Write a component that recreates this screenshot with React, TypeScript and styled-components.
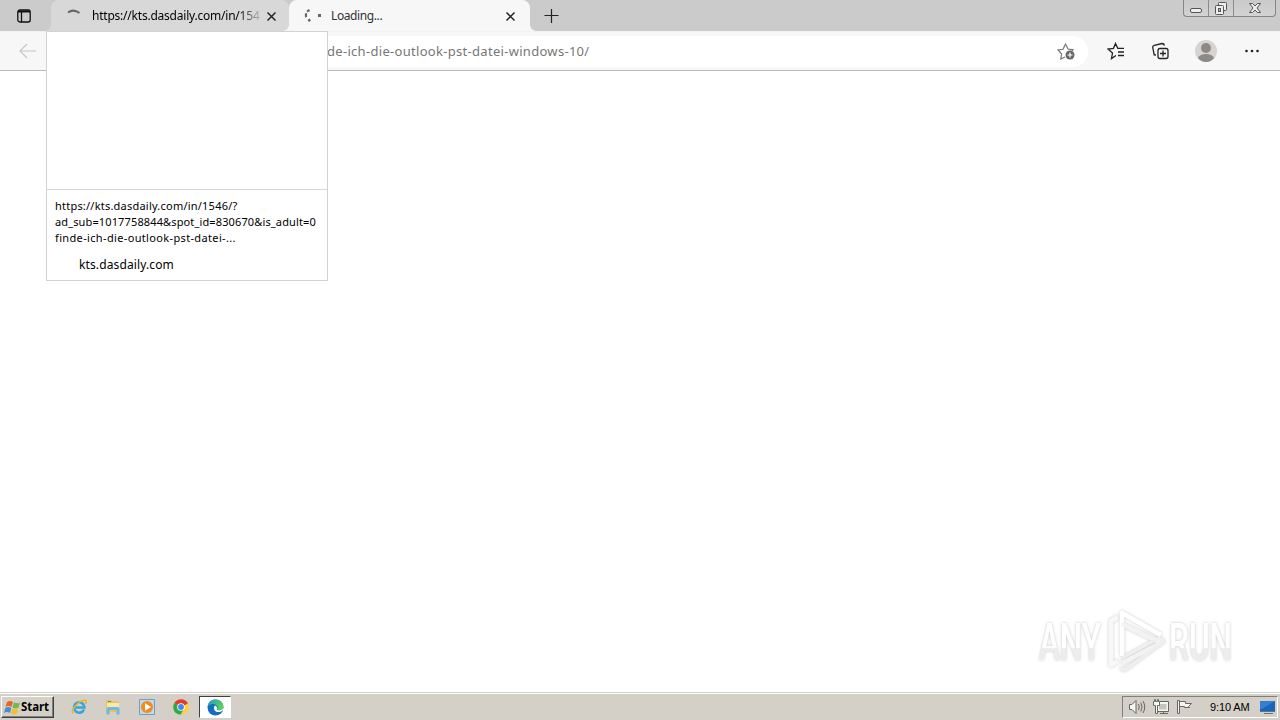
import React from 'react';
import styled, { createGlobalStyle } from 'styled-components';

const GlobalStyle = createGlobalStyle`
    * { box-sizing: border-box; }
    body {
        margin: 0;
        overflow: hidden;
        background: #fff;
        font-family: "Noto Sans", "Open Sans", sans-serif;
    }
    svg { display: block; flex: none; }
`;

const Screen = styled.div`
    position: relative;
    display: flex;
    flex-direction: column;
    width: 1280px;
    height: 720px;
`;

const TabStrip = styled.div`
    display: flex;
    flex: none;
    height: 31px;
    background: #cbcbcb;
`;

const TabActions = styled.div`
    width: 51px;
    padding: 9px 0 0 17px;
`;

const Tab = styled.div<{ $active?: boolean }>`
    position: relative;
    display: flex;
    align-items: center;
    width: ${props => props.$active ? 241 : 238}px;
    padding: 1px 0 0 15px;
    border-radius: 8px 8px 0 0;
    background: ${props => props.$active ? "#f7f7f7" : "#d8d8d8"};
    &::before, &::after {
        content: "";
        position: absolute;
        bottom: 0;
        width: 6px;
        height: 6px;
    }
    &::before {
        left: -6px;
        background: radial-gradient(circle at 0 0, transparent 5.5px, ${props => props.$active ? "#f7f7f7" : "#d8d8d8"} 6px);
    }
    &::after {
        right: -6px;
        background: radial-gradient(circle at 100% 0, transparent 5.5px, ${props => props.$active ? "#f7f7f7" : "#d8d8d8"} 6px);
    }
`;

const Label = styled.span<{ $size: number, $spacing?: number, $color?: string, $width?: number }>`
    display: block;
    flex: none;
    width: ${props => props.$width ? props.$width + "px" : "auto"};
    white-space: nowrap;
    font-size: ${props => props.$size}px;
    line-height: 18px;
    letter-spacing: ${props => props.$spacing ?? 0}px;
    color: ${props => props.$color ?? "#000"};
`;

const TabTitle = styled(Label)<{ $fade?: boolean }>`
    margin-left: ${props => props.$fade ? 11 : 9}px;
    ${props => props.$fade && "-webkit-mask-image: linear-gradient(90deg, #000 146px, transparent 172px);"}
`;

const CloseIcon = styled.svg`
    margin-left: 2px;
`;

const NewTab = styled.div`
    padding: 9px 0 0 14px;
`;

const WindowButtons = styled.div`
    display: flex;
    height: 17px;
    margin: 0 4px 0 auto;
    border: 1px solid #868686;
    border-top: 0;
    border-radius: 0 0 4px 4px;
    background: linear-gradient(#c9c9c9, #d3d3d3);
    overflow: hidden;
`;

const WindowButton = styled.div<{ $width: number }>`
    display: flex;
    justify-content: center;
    width: ${props => props.$width}px;
    & + & { border-left: 1px solid #8b8b8b; }
`;

const Toolbar = styled.div`
    display: flex;
    align-items: center;
    flex: none;
    height: 40px;
    padding-left: 19px;
    background: #f7f7f7;
    border-top: 1px solid #f2f2f2;
    border-bottom: 1px solid #b9b9b9;
`;

const AddressBar = styled.div`
    display: flex;
    align-items: center;
    justify-content: space-between;
    width: 958px;
    height: 31px;
    margin-left: 93px;
    padding: 0 13px 0 197px;
    border-radius: 16px;
    background: #fff;
`;

const ToolbarIcons = styled.div`
    display: flex;
    align-items: center;
    margin-left: 19px;
`;

const Avatar = styled.svg`
    margin: 0 17px 0 25px;
`;

const Page = styled.main`
    flex: 1;
    display: flex;
    justify-content: flex-end;
    align-items: flex-end;
    padding: 0 40px 14px 0;
    background: #fff;
`;

const HoverCard = styled.div`
    position: absolute;
    left: 46px;
    top: 31px;
    width: 282px;
    height: 250px;
    border: 1px solid #d2d2d2;
    background: #fff;
`;

const Preview = styled.div`
    height: 158px;
    border-bottom: 1px solid #d6d6d6;
`;

const CardText = styled.div`
    display: flex;
    flex-direction: column;
    padding: 8px 0 0 8px;
`;

const CardLine = styled(Label)`
    line-height: 16px;
`;

const CardHost = styled(Label)`
    margin: 10px 0 0 24px;
`;

const Taskbar = styled.footer`
    display: flex;
    align-items: center;
    flex: none;
    height: 28px;
    padding: 1px 2px 0 1px;
    border-top: 1px solid #d4d0c8;
    background: #d4d0c8;
    box-shadow: inset 0 1px 0 #fff;
`;

const StartButton = styled.div`
    display: flex;
    align-items: center;
    width: 53px;
    height: 22px;
    padding-left: 2px;
    border: 1px solid;
    border-color: #fff #404040 #404040 #fff;
    box-shadow: inset -1px -1px 0 #808080;
`;

const StartText = styled.b`
    font: bold 11.5px/18px "Open Sans", sans-serif;
    letter-spacing: -0.1px;
    color: #000;
`;

const QuickLaunch = styled.div`
    display: flex;
    align-items: center;
    gap: 18px;
    margin-left: 17px;
`;

const ActiveTask = styled.div`
    display: flex;
    align-items: center;
    justify-content: center;
    width: 32px;
    height: 22px;
    margin-left: 10px;
    border: 1px solid;
    border-color: #404040 #fff #fff #404040;
    background: #fff;
`;

const Tray = styled.div`
    display: flex;
    align-items: center;
    width: 156px;
    height: 22px;
    margin-left: auto;
    padding-left: 6px;
    border: 1px solid;
    border-color: #808080 #fff #fff #808080;
`;

const Clock = styled.span`
    width: 42px;
    margin: 0 9px 0 15px;
    white-space: nowrap;
    font: 11px/16px "Liberation Sans", sans-serif;
    letter-spacing: -0.1px;
    color: #000;
`;

const TabMenuIcon = () => (
    <svg width="14" height="14" viewBox="0 0 14 14" fill="none" stroke="#111" strokeWidth="1.3">
        <rect x=".8" y="1" width="12.4" height="12" rx="2" />
        <path d="M1 2.5h12" strokeWidth="2" />
        <path d="M4.5 3v10" />
    </svg>
);

const Close = () => (
    <CloseIcon width="15" height="15" viewBox="0 0 15 15" stroke="#222" strokeWidth="1.5">
        <path d="M3.5 3.5l8 8M11.5 3.5l-8 8" />
    </CloseIcon>
);

const Watermark = () => (
    <svg width="204" height="74" viewBox="0 0 204 74" overflow="visible">
        <defs>
            <linearGradient id="letters" x1="0" y1="0" x2="0" y2="1">
                <stop offset=".58" stopColor="#fff" />
                <stop offset=".6" stopColor="#ededed" />
            </linearGradient>
            <filter id="halo" x="-10%" y="-20%" width="120%" height="140%">
                <feDropShadow dx="0" dy="0" stdDeviation="1.5" floodColor="#888" floodOpacity=".5" />
            </filter>
        </defs>
        <g filter="url(#halo)">
            <g fill="url(#letters)" fontFamily="Roboto" fontSize="52" fontWeight="500">
                <text x="3" y="56" textLength="62" lengthAdjust="spacingAndGlyphs">ANY</text>
                <text x="133" y="56" textLength="63" lengthAdjust="spacingAndGlyphs">RUN</text>
            </g>
            <g fill="none" stroke="#fff" strokeWidth="4.5" strokeLinejoin="round">
                <path d="M86 52V9l39 22" />
                <path d="M82 13l-7 4v44l7-4" stroke="#f8f8f8" />
                <path d="M86 20l39 19-39 20" stroke="#f3f3f3" />
                <path d="M86 54l37-20 5 3-39 29-5-2" stroke="#efefef" strokeWidth="3" />
            </g>
        </g>
    </svg>
);

const WindowsLogo = () => (
    <svg width="17" height="17" viewBox="0 0 17 17">
        <path d="M3 3q3-2 6 0L7.5 8q-3-2-6 0z" fill="#e8642b" />
        <path d="M10 3.3q3 2 6 .2L14.5 8.5q-3 2-6 0z" fill="#72b84a" />
        <path d="M1.3 9q3-2 6 0L6 14q-3-2-6 0z" fill="#428fd2" />
        <path d="M8.3 9.4q3 2 6 0L13 14.6q-3 2-6 0z" fill="#f4bd32" />
    </svg>
);

const ExplorerLogo = () => (
    <svg width="16" height="16" viewBox="0 0 16 16" fill="none">
        <path d="M13 10.5A5.2 5.2 0 1 1 13.4 8.5H4" stroke="#3ba4dc" strokeWidth="2.6" />
        <path d="M2 14.5C-1 11 8 1.5 14 1.3c2 0 1.5 2 .5 3.5" stroke="#e6b52e" strokeWidth="1.5" />
    </svg>
);

const FolderLogo = () => (
    <svg width="16" height="16" viewBox="0 0 16 16">
        <path d="M1 1h5l1 1.500h7V13H1z" fill="#e7c260" />
        <path d="M2 4h12v7H2z" fill="#f9e9a4" />
        <path d="M1.500 15.500V10q0-2 2-2h9q2 0 2 2v5.500h-3V11h-7v4.500z" fill="#72b8df" />
        <path d="M3 2.5h3" stroke="#4ba35c" />
    </svg>
);

const PlayerLogo = () => (
    <svg width="16" height="16" viewBox="0 0 16 16">
        <path d="M.5.5h15v15H.5z" fill="#c2d9ec" stroke="#6f9fc8" />
        <circle cx="8" cy="8" r="6" fill="#f18a20" />
        <path d="M6 4.3L12 8l-6 3.7z" fill="#fff" />
    </svg>
);

const ChromeLogo = () => (
    <svg width="16" height="16" viewBox="0 0 16 16">
        <circle cx="8" cy="8" r="7.8" fill="#ffce44" />
        <path d="M8 8L1.3 4A7.8 7.8 0 0 1 14.8 4.2z" fill="#e33b2e" />
        <path d="M8 8L1.3 4A7.8 7.8 0 0 0 7.5 15.8l3.5-6z" fill="#2da94f" />
        <path d="M8 4.2h6.8L8 8z" fill="#e33b2e" />
        <circle cx="8" cy="8" r="3.8" fill="#fff" />
        <circle cx="8" cy="8" r="2.9" fill="#4285f4" />
    </svg>
);

const EdgeLogo = () => (
    <svg width="17" height="17" viewBox="0 0 17 17">
        <defs>
            <linearGradient id="edge" x1="0" y1="0" x2="1" y2=".4">
                <stop stopColor="#159bd7" />
                <stop offset="1" stopColor="#62cf55" />
            </linearGradient>
        </defs>
        <circle cx="8.5" cy="8.5" r="8" fill="#126fbd" />
        <path d="M.5 8C1 3 4.5.5 8.5.5c5 0 8 3.5 8 7 0 3-4 4.5-6.500 3 2-3-1-5.500-4-5.500C3.500 5 1.500 6 .5 8z" fill="url(#edge)" />
        <path d="M8 6.500c-2 2-1 6 2.500 6.500 2 .3 3.500-.3 5-1.500l1.500-3-3 2.500c-2 .7-4 .3-4.300-.7.8-1.500.3-3-1.700-3.800z" fill="#fff" />
    </svg>
);

const TrayIcons = () => (
    <svg width="66" height="18" viewBox="0 0 66 18" fill="#f5f5f2" stroke="#666">
        <path d="M.5 6.500H3l4-4v13l-4-4H.5z" />
        <path d="M9.500 6q1.500 3 0 6M11.800 4.500q2.500 4.500 0 9M14 3q3.500 6 0 12" fill="none" />
        <path d="M27.500 3.500h12v10h-12z" />
        <path d="M30 6h7.500v5.500H30z" fill="#c6c4bf" stroke="none" />
        <path d="M31 15.500h8M34.500 13.500v2" />
        <path d="M25.500 1.500v2h-1v4h2v8h2v-8h2v-4h-1v-2h-1v2h-2v-2z" />
        <path d="M48.500 2.500h2v13h-2zM50.500 3.500h6v2h6l-3 3 1 1h-5v-1h-5z" />
    </svg>
);

const MonitorIcon = () => (
    <svg width="17" height="16" viewBox="0 0 17 16">
        <path d="M0 2h15v10H0z" fill="#1765bd" />
        <path d="M0 2h15L2 10H0z" fill="#347fd1" />
        <path d="M0 12.500h15M4 14.500h9" stroke="#65717c" />
    </svg>
);

function App() {
    return (
        <Screen>
            <GlobalStyle />
            <TabStrip>
                <TabActions><TabMenuIcon /></TabActions>
                <Tab>
                    <svg width="15" height="15" viewBox="0 0 15 15" fill="none" stroke="#666" strokeWidth="2">
                        <path d="M2 3.500Q7.500-.5 13.500 4" />
                    </svg>
                    <TabTitle $size={12} $spacing={-0.22} $width={170} $fade>https://kts.dasdaily.com/in/154</TabTitle>
                    <Close />
                </Tab>
                <Tab $active>
                    <svg width="18" height="16" viewBox="0 0 18 16" fill="#666">
                        <path d="M2.500 2.500l2.500-1.500 1 2-2.500 1.500zM.8 5.500L3 5v4l-2 .5zM3.500 12l2-1.500 1.500 2L5 14zM14 6h3v3h-3z" />
                    </svg>
                    <TabTitle $size={12} $spacing={-0.4} $width={170} $color="#333">Loading...</TabTitle>
                    <Close />
                </Tab>
                <NewTab>
                    <svg width="15" height="14" viewBox="0 0 15 14" stroke="#222" strokeWidth="1.2"><path d="M7.500 0v14M.5 6.500h14" /></svg>
                </NewTab>
                <WindowButtons>
                    <WindowButton $width={24}>
                        <svg width="14" height="16"><rect x="1.500" y="8.500" width="11" height="4" rx="1.500" fill="#eee" stroke="#555" /></svg>
                    </WindowButton>
                    <WindowButton $width={25}>
                        <svg width="14" height="16" fill="#eee" stroke="#555"><rect x="4.500" y="2.500" width="8" height="8" rx="1" /><rect x="1.500" y="5.500" width="8" height="9" rx="1" /><rect x="4.500" y="8.500" width="2" height="3" fill="#bbb" /></svg>
                    </WindowButton>
                    <WindowButton $width={42}>
                        <svg width="14" height="16" fill="#eee" stroke="#555"><path d="M1.500 3.500h3L7 6l2.500-2.500h3L9 8l3.500 4.500h-3L7 10l-2.500 2.500h-3L5 8z" /></svg>
                    </WindowButton>
                </WindowButtons>
            </TabStrip>
            <Toolbar>
                <svg width="18" height="16" viewBox="0 0 18 16" fill="none" stroke="#c6c6c6" strokeWidth="1.2"><path d="M8 1L1 8l7 7M1.500 8H17" /></svg>
                <AddressBar>
                    <Label $size={13} $spacing={0.3} $color="#777">de-ich-die-outlook-pst-datei-windows-10/</Label>
                    <svg width="18" height="18" viewBox="0 0 18 18" fill="none" stroke="#777" strokeWidth="1.200">
                        <path d="M8 15l-4.200 2 .8-5L1 8l5-.7L8.500 2 11 7l5 .8-1 1.200" />
                        <circle cx="13" cy="13" r="4.500" fill="#666" stroke="none" />
                        <path d="M10.500 13h5M13 10.500v5" stroke="#fff" />
                    </svg>
                </AddressBar>
                <ToolbarIcons>
                    <svg width="18" height="18" viewBox="0 0 18 18" fill="none" stroke="#222" strokeWidth="1.300">
                        <path d="M9 13.500l-4.500 3 1-5.500L1 7l5.500-.7L8.500 1.500l2.300 4.800H17M11 10h6M11 13.500h6" />
                    </svg>
                    <svg width="45" height="18" viewBox="0 0 45 18" fill="none" stroke="#222" strokeWidth="1.300">
                        <path d="M31 13l-1.800-.2-1.500-7.500q0-1.500 1.500-2L37 1.500q2 0 2.500 2" />
                        <rect x="33" y="6.500" width="10" height="10" rx="2" />
                        <path d="M38 8.500v6M35 11.500h6" />
                    </svg>
                    <Avatar width="22" height="22" viewBox="0 0 22 22">
                        <circle cx="11" cy="11" r="11" fill="#d6d3d0" />
                        <circle cx="11" cy="8" r="5" fill="#8c8986" />
                        <path d="M3 18q2-4 8-4t8 4q-3 4-8 4t-8-4" fill="#8c8986" />
                    </Avatar>
                    <svg width="37" height="4" fill="#222"><circle cx="12.500" cy="2" r="1.300" /><circle cx="18" cy="2" r="1.300" /><circle cx="23.500" cy="2" r="1.300" /></svg>
                </ToolbarIcons>
            </Toolbar>
            <Page><Watermark /></Page>
            <Taskbar>
                <StartButton><WindowsLogo /><StartText>Start</StartText></StartButton>
                <QuickLaunch><ExplorerLogo /><FolderLogo /><PlayerLogo /><ChromeLogo /></QuickLaunch>
                <ActiveTask><EdgeLogo /></ActiveTask>
                <Tray><TrayIcons /><Clock>9:10 AM</Clock><MonitorIcon /></Tray>
            </Taskbar>
            <HoverCard>
                <Preview />
                <CardText>
                    <CardLine $size={11} $spacing={0.22}>https://kts.dasdaily.com/in/1546/?</CardLine>
                    <CardLine $size={11} $spacing={0.13}>ad_sub=1017758844&amp;spot_id=830670&amp;is_adult=0</CardLine>
                    <CardLine $size={11} $spacing={0.35}>finde-ich-die-outlook-pst-datei-...</CardLine>
                    <CardHost $size={12} $spacing={0.12}>kts.dasdaily.com</CardHost>
                </CardText>
            </HoverCard>
        </Screen>
    );
}
export default App;
